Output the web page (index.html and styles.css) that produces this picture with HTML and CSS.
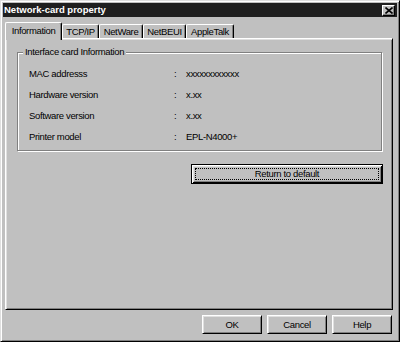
FILE: index.html
```html
<!DOCTYPE html>
<html>
<head>
<meta charset="utf-8">
<title>Network-card property</title>
<link rel="stylesheet" href="styles.css">
</head>
<body>
<div class="window">
  <div class="titlebar">
    <span class="title">Network-card property</span>
    <button class="close" aria-label="Close">
      <svg width="8" height="7" viewBox="0 0 8 7"><path d="M0.5 0.5 L7.5 6.5 M7.5 0.5 L0.5 6.5" stroke="#000" stroke-width="1.6" fill="none"/></svg>
    </button>
  </div>
  <div class="content">
    <div class="tabs">
      <div class="tab tab-info active">Information</div>
      <div class="tab tab-tcp">TCP/IP</div>
      <div class="tab tab-netware">NetWare</div>
      <div class="tab tab-netbeui">NetBEUI</div>
      <div class="tab tab-apple">AppleTalk</div>
    </div>
    <div class="panel">
      <fieldset class="group">
        <legend>Interface card Information</legend>
        <div class="row"><span class="label">MAC addresss</span><span class="colon">:</span><span class="value">xxxxxxxxxxxx</span></div>
        <div class="row"><span class="label">Hardware version</span><span class="colon">:</span><span class="value">x.xx</span></div>
        <div class="row"><span class="label">Software version</span><span class="colon">:</span><span class="value">x.xx</span></div>
        <div class="row"><span class="label">Printer model</span><span class="colon">:</span><span class="value">EPL-N4000+</span></div>
      </fieldset>
      <div class="panel-actions">
        <button class="btn btn-default"><span class="focus">Return to default</span></button>
      </div>
    </div>
    <div class="actions">
      <button class="btn">OK</button>
      <button class="btn">Cancel</button>
      <button class="btn">Help</button>
    </div>
  </div>
</div>
</body>
</html>
```
FILE: styles.css
```css
* { box-sizing: border-box; }
html, body { margin: 0; padding: 0; }
body {
  background: #c0c0c0;
  font-family: "Liberation Sans", Arial, sans-serif;
  font-size: 9.5px;
  letter-spacing: -0.35px;
  color: #000;
}
.window {
  width: 400px;
  height: 342px;
  background: #c0c0c0;
  border: 1px solid;
  border-color: #dfdfdf #000 #000 #dfdfdf;
  box-shadow: inset 1px 1px #fff, inset -1px -1px #808080;
  padding: 2px;
  display: flex;
  flex-direction: column;
}
.titlebar {
  height: 14px;
  background: #1f1f1f;
  color: #fff;
  display: flex;
  align-items: center;
  justify-content: space-between;
  padding: 0 2px 0 1px;
  flex: none;
}
.title {
  font-weight: bold;
  font-size: 9.5px;
  letter-spacing: 0;
  line-height: 14px;
}
.close {
  width: 13px;
  height: 11px;
  padding: 0;
  margin: 0;
  background: #c0c0c0;
  border: 1px solid;
  border-color: #fff #000 #000 #fff;
  box-shadow: inset -1px -1px #808080;
  display: flex;
  align-items: center;
  justify-content: center;
}
.close svg { display: block; }
.content {
  flex: 1;
  display: flex;
  flex-direction: column;
  padding: 5px 4px 0 2px;
}
.tabs {
  display: flex;
  align-items: flex-end;
  height: 16px;
  flex: none;
}
.tab {
  height: 14px;
  background: #c0c0c0;
  border-top: 1px solid #fff;
  border-left: 1px solid #fff;
  border-right: 1px solid #000;
  border-radius: 2px 2px 0 0;
  box-shadow: inset -1px 0 #808080;
  text-align: center;
  line-height: 13px;
  white-space: nowrap;
}
.tab.active {
  height: 18px;
  margin-bottom: -2px;
  position: relative;
  z-index: 1;
  line-height: 15px;
}
.tab-info { width: 57px; }
.tab-tcp { width: 37px; }
.tab-netware { width: 44px; }
.tab-netbeui { width: 43px; }
.tab-apple { width: 48px; }
.panel {
  height: 272px;
  flex: none;
  border: 1px solid;
  border-color: #fff #000 #000 #fff;
  box-shadow: inset 1px 1px #dfdfdf, inset -1px -1px #808080;
  padding: 7px 10px 0 11px;
}
.group {
  margin: 0;
  min-width: 0;
  border: 1px solid #808080;
  box-shadow: 1px 1px #fff, inset 1px 1px #fff;
  padding: 5px 0 3px 11px;
}
.group legend {
  padding: 0 2px;
  margin-left: -6px;
  line-height: 12px;
  background: #c0c0c0;
  position: relative;
}
.row {
  display: flex;
  align-items: center;
  height: 21px;
}
.label { width: 145px; }
.colon { width: 12px; }
.value { flex: 1; }
.panel-actions {
  display: flex;
  justify-content: flex-end;
  margin-top: 13px;
  margin-right: -1px;
}
.btn {
  font: inherit;
  letter-spacing: inherit;
  color: #000;
  background: #c0c0c0;
  border: 1px solid;
  border-color: #fff #000 #000 #fff;
  box-shadow: inset 1px 1px #dfdfdf, inset -1px -1px #808080;
  width: 60px;
  height: 19px;
  padding: 0;
  margin: 0;
}
.btn-default {
  width: 192px;
  height: 20px;
  border: 1px solid #000;
  box-shadow: inset 1px 1px #fff, inset -1px -1px #000, inset 2px 2px #dfdfdf, inset -2px -2px #808080;
  padding: 3px;
}
.focus {
  display: block;
  height: 100%;
  border: 1px dotted #000;
  line-height: 10px;
}
.actions {
  display: flex;
  justify-content: flex-end;
  gap: 5px;
  margin-top: 5px;
  margin-right: 1px;
}
```
